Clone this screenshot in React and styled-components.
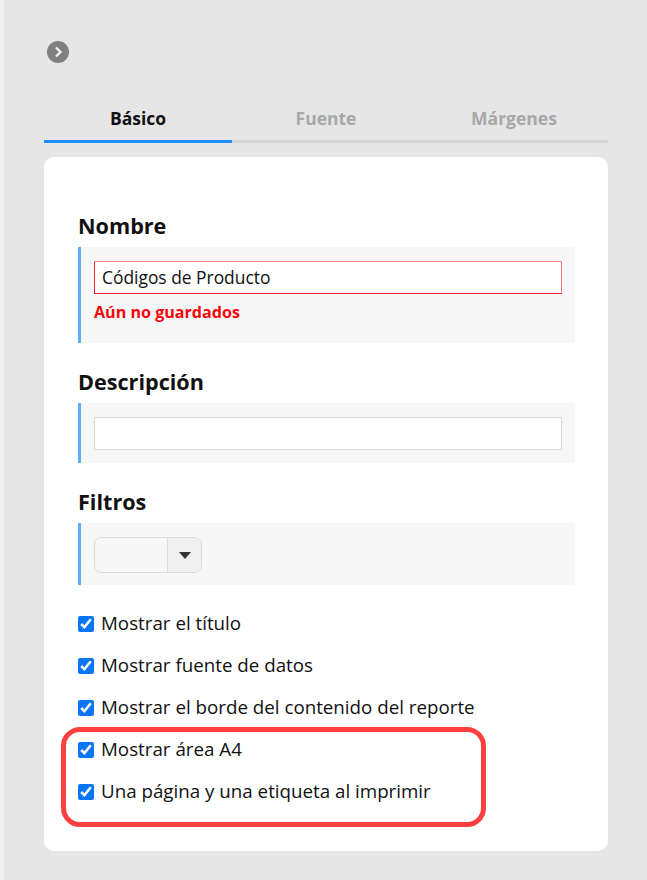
import React from "react";
import styled, { createGlobalStyle } from "styled-components";

const Global = createGlobalStyle`
  html, body { margin: 0; padding: 0; background: #f1f1f1; }
  body { font-family: "Open Sans", "Noto Sans", sans-serif; color: #111; }
`;

const Page = styled.div`
  width: 643px;
  height: 880px;
  margin-left: 4px;
  box-sizing: border-box;
  background: #e6e6e6;
  padding: 41px 39px 0 40px;
  overflow: hidden;
`;

const BackButton = styled.div`
  width: 22px;
  height: 22px;
  margin-left: 3px;
  border-radius: 50%;
  background: #808080;
  display: flex;
  align-items: center;
  justify-content: center;
`;

const Tabs = styled.div`
  display: grid;
  grid-template-columns: repeat(3, 1fr);
  margin-top: 40px;
  border-bottom: 3px solid #d6d6d6;
`;

const Tab = styled.div`
  height: 37px;
  margin-bottom: -3px;
  box-sizing: content-box;
  border-bottom: 3px solid ${p => (p.$active ? "#1e8fff" : "transparent")};
  text-align: center;
  font-size: 17.5px;
  font-weight: 700;
  line-height: 30px;
  color: ${p => (p.$active ? "#111" : "#a8a8a8")};
`;

const Card = styled.div`
  margin-top: 14px;
  height: 694px;
  box-sizing: border-box;
  background: #fff;
  border-radius: 10px;
  padding: 55px 33px 0 34px;
`;

const Label = styled.div`
  font-size: 21.6px;
  font-weight: 700;
  line-height: 28px;
  color: #111;
  margin-bottom: 7px;
`;

const Field = styled.div`
  background: #f7f7f7;
  border-left: 3px solid #5caeff;
  box-sizing: border-box;
  height: ${p => p.$h}px;
  padding: 14px 13px 0 13px;
  margin-bottom: 25px;
`;

const TextInput = styled.div`
  height: 33px;
  box-sizing: border-box;
  background: #fff;
  border: 1px solid ${p => (p.$error ? "#ff2329" : "#d9d9d9")};
  border-top-color: ${p => (p.$error ? "#f98a8c" : "#d9d9d9")};
  border-right-color: ${p => (p.$error ? "#f97a7c" : "#d9d9d9")};
  padding-left: 7px;
  font-size: 17.4px;
  line-height: 31px;
  color: #111;
`;

const ErrorText = styled.div`
  margin-top: 7px;
  font-size: 16.1px;
  font-weight: 700;
  line-height: 22px;
  color: #f5060c;
`;

const Select = styled.div`
  display: flex;
  width: 108px;
  height: 36px;
  box-sizing: border-box;
  border: 1px solid #dcdcdc;
  border-radius: 7px;
  background: #f7f7f7;
  overflow: hidden;
`;

const SelectValue = styled.div`
  flex: 1;
  border-right: 1px solid #dcdcdc;
`;

const SelectArrow = styled.div`
  width: 33px;
  background: #f0f0f0;
  display: flex;
  align-items: center;
  justify-content: center;
`;

const Options = styled.div`
  display: flex;
  flex-direction: column;
  gap: 14px;
  margin-top: -1px;
`;

const Highlighted = styled.div`
  position: relative;
  display: flex;
  flex-direction: column;
  gap: 14px;
`;

const Annotation = styled.div`
  position: absolute;
  left: -17px;
  top: -8px;
  width: 425px;
  height: 100px;
  box-sizing: border-box;
  border: 5.5px solid #ff4040;
  border-radius: 19px;
  pointer-events: none;
`;

const Option = styled.label`
  display: flex;
  align-items: center;
  height: 28px;
  font-size: 18.75px;
  line-height: 28px;
  color: #111;
`;

const Check = styled.input.attrs({ type: "checkbox", readOnly: true })`
  width: 16px;
  height: 16px;
  margin: 1px 7px 0 0;
  accent-color: #0b76f5;
`;

const Item = ({ children }) => (
  <Option>
    <Check checked />
    {children}
  </Option>
);

export default function App() {
  return (
    <>
      <Global />
      <Page>
        <BackButton>
          <svg width="14" height="14" viewBox="0 0 14 14" fill="none">
            <path d="M5 2.5 9.5 7 5 11.5" stroke="#f2f2f2" strokeWidth="2.4" />
          </svg>
        </BackButton>
        <Tabs>
          <Tab $active>Básico</Tab>
          <Tab>Fuente</Tab>
          <Tab>Márgenes</Tab>
        </Tabs>
        <Card>
          <Label>Nombre</Label>
          <Field $h={96}>
            <TextInput $error>Códigos de Producto</TextInput>
            <ErrorText>Aún no guardados</ErrorText>
          </Field>
          <Label>Descripción</Label>
          <Field $h={60}>
            <TextInput />
          </Field>
          <Label>Filtros</Label>
          <Field $h={62}>
            <Select>
              <SelectValue />
              <SelectArrow>
                <svg width="12" height="7" viewBox="0 0 12 7">
                  <path d="M0 0h12L6 7z" fill="#333" />
                </svg>
              </SelectArrow>
            </Select>
          </Field>
          <Options>
            <Item>Mostrar el título</Item>
            <Item>Mostrar fuente de datos</Item>
            <Item>Mostrar el borde del contenido del reporte</Item>
            <Highlighted>
              <Annotation />
              <Item>Mostrar área A4</Item>
              <Item>Una página y una etiqueta al imprimir</Item>
            </Highlighted>
          </Options>
        </Card>
      </Page>
    </>
  );
}
